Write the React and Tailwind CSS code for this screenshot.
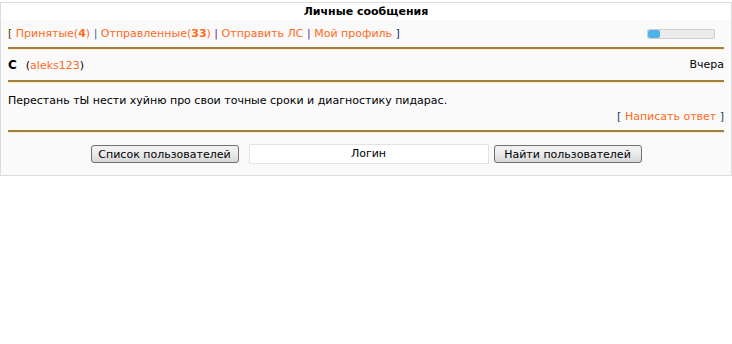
import React from 'react';

const font = { fontFamily: '"DejaVu Sans", Verdana, Tahoma, sans-serif' };

const Rule = () => (
  <div className="mx-[7px] border-t-2 border-[#a2803f] border-b border-b-[#fde9c4]" />
);

const Button = ({ children, className = '' }) => (
  <button
    className={`h-[18px] rounded-[3px] border border-[#707070] bg-gradient-to-b from-[#f2f2f2] via-[#ebebeb] to-[#d6d6d6] text-[11px] leading-none text-black ${className}`}
  >
    {children}
  </button>
);

export default function App() {
  return (
    <div className="w-[732px] h-[344px] bg-white pt-[2px] text-[11px] text-black" style={font}>
      <div className="border border-[#dcdcdc] bg-[#fafafa]">
        {/* Header */}
        <div className="h-[17px] bg-white text-center font-bold text-[11px] leading-[17px]">
          Личные сообщения
        </div>

        {/* Nav */}
        <div className="flex items-center justify-between h-[27px] pl-[7px] pr-[16px]">
          <div className="text-[11px] leading-none">
            <span className="text-[#5a3a00]">[</span>{' '}
            <span className="text-[#ff6a1a]">Принятые(<b>4</b>)</span>{' '}
            <span className="text-[#2a6fa0]">|</span>{' '}
            <span className="text-[#ff6a1a]">Отправленные(<b>33</b>)</span>{' '}
            <span className="text-[#6a2a7a]">|</span>{' '}
            <span className="text-[#ff6a1a]">Отправить ЛС</span>{' '}
            <span className="text-[#6a2a7a]">|</span>{' '}
            <span className="text-[#ff6a1a]">Мой профиль</span>{' '}
            <span className="text-[#1a2a6a]">]</span>
          </div>
          <div className="w-[68px] h-[10px] rounded-[2px] border border-[#cfcfcf] bg-[#ebebeb] overflow-hidden">
            <div className="h-full w-[12px] bg-[#4db3e8] rounded-[2px]" />
          </div>
        </div>
        <Rule />

        {/* Message header */}
        <div className="flex items-center justify-between h-[30px] px-[7px] text-[11px]">
          <div>
            <b className="font-bold text-[12px]">C</b>
            <span className="ml-[9px]">
              (<span className="text-[#ff6a1a]">aleks123</span>)
            </span>
          </div>
          <span>Вчера</span>
        </div>
        <Rule />

        {/* Message body */}
        <div className="px-[7px] pt-[10px] text-[11px] leading-[16px]">
          Перестань тЫ нести хуйню про свои точные сроки и диагностику пидарас.
        </div>
        <div className="px-[7px] text-right text-[11px] leading-[16px] pb-[5px]">
          <span className="text-[#1a3a6a]">[</span>{' '}
          <span className="text-[#ff6a1a]">Написать ответ</span>{' '}
          <span className="text-[#1a3a6a]">]</span>
        </div>
        <Rule />

        {/* Footer controls */}
        <div className="flex items-center justify-center gap-[5px] pt-[11px] pb-[11px]">
          <Button className="w-[148px] mr-[5px]">Список пользователей</Button>
          <div className="w-[240px] h-[20px] border border-[#e3e3e3] bg-white text-center text-[11px] leading-[18px]">
            Логин
          </div>
          <Button className="w-[148px]">Найти пользователей</Button>
        </div>
      </div>
    </div>
  );
}
